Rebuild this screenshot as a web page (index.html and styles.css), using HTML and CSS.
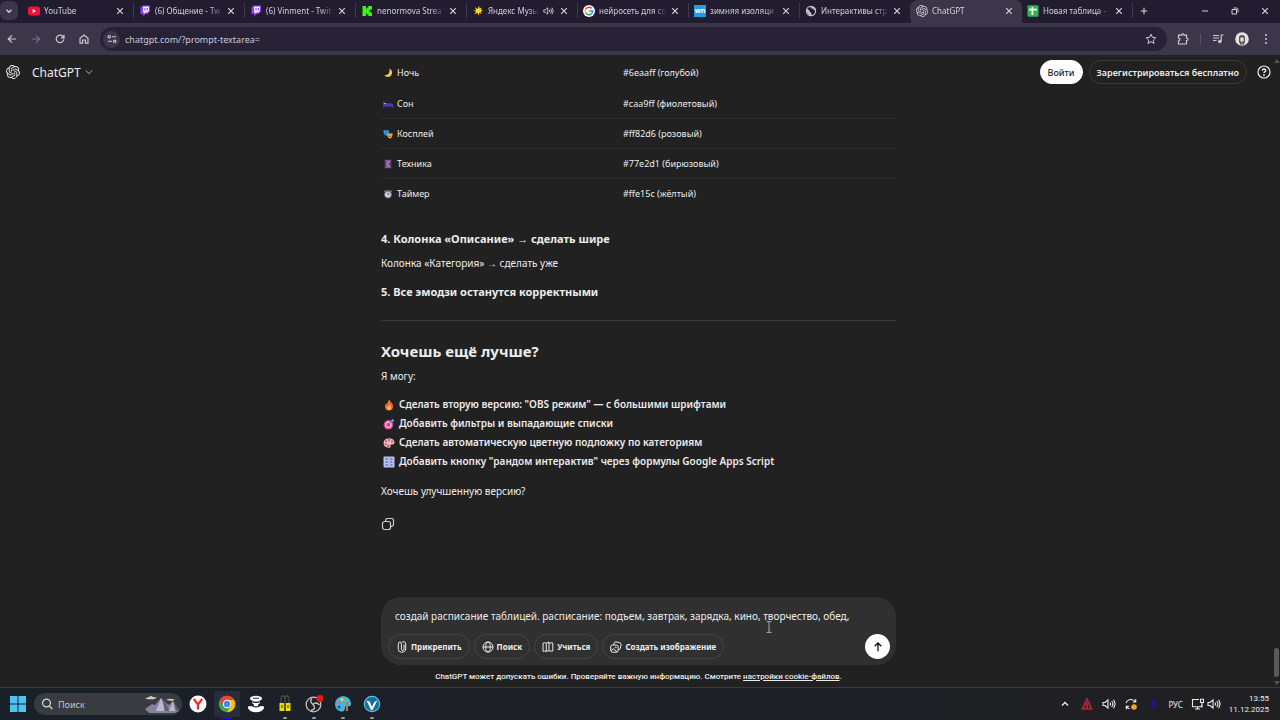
FILE: index.html
```html
<!DOCTYPE html>
<html lang="ru">
<head>
    <meta charset="UTF-8">
    <meta name="viewport" content="width=device-width, initial-scale=1.0">
    <title>ChatGPT</title>
    <link rel="stylesheet" href="styles.css">
</head>
<body>
    <!-- Общие иконки -->
    <svg class="sprite" width="0" height="0" aria-hidden="true">
        <symbol id="close" viewBox="0 0 8 8"><path d="M1.2 1.2l5.6 5.6M6.8 1.2L1.2 6.8" fill="none" stroke="currentColor" stroke-width="1.2"/></symbol>
        <symbol id="twitch" viewBox="0 0 12 12"><path d="M1.5 2.5L3.5.5H11v6L8.5 9H6.3L4 11.5V9H1.5z" fill="#8a3df5"/><path d="M4 1.5h6V6L8.3 7.6H6.5L5 9V7.6H4z" fill="#eee6ff"/><path d="M6 3v2.4M8.3 3v2.4" stroke="#8a3df5"/></symbol>
        <symbol id="openai" viewBox="0 0 24 24"><path fill="currentColor" d="M22.2819 9.8211a5.9847 5.9847 0 0 0-.5157-4.9108 6.0462 6.0462 0 0 0-6.5098-2.9A6.0651 6.0651 0 0 0 4.9807 4.1818a5.9847 5.9847 0 0 0-3.9977 2.9 6.0462 6.0462 0 0 0 .7427 7.0966 5.98 5.98 0 0 0 .511 4.9107 6.051 6.051 0 0 0 6.5146 2.9001A5.9847 5.9847 0 0 0 13.2599 24a6.0557 6.0557 0 0 0 5.7718-4.2058 5.9894 5.9894 0 0 0 3.9977-2.9001 6.0557 6.0557 0 0 0-.7475-7.0729zm-9.022 12.6081a4.4755 4.4755 0 0 1-2.8764-1.0408l.1419-.0804 4.7783-2.7582a.7948.7948 0 0 0 .3927-.6813v-6.7369l2.02 1.1686a.071.071 0 0 1 .038.052v5.5826a4.504 4.504 0 0 1-4.4945 4.4944zm-9.6607-4.1254a4.4708 4.4708 0 0 1-.5346-3.0137l.142.0852 4.783 2.7582a.7712.7712 0 0 0 .7806 0l5.8428-3.3685v2.3324a.0804.0804 0 0 1-.0332.0615L9.74 19.9502a4.4992 4.4992 0 0 1-6.1408-1.6464zM2.3408 7.8956a4.485 4.485 0 0 1 2.3655-1.9728V11.6a.7664.7664 0 0 0 .3879.6765l5.8144 3.3543-2.0201 1.1685a.0757.0757 0 0 1-.071 0l-4.8303-2.7865A4.504 4.504 0 0 1 2.3408 7.872zm16.5963 3.8558L13.1038 8.364 15.1192 7.2a.0757.0757 0 0 1 .071 0l4.8303 2.7913a4.4944 4.4944 0 0 1-.6765 8.1042v-5.6772a.79.79 0 0 0-.407-.667zm2.0107-3.0231l-.142-.0852-4.7735-2.7818a.7759.7759 0 0 0-.7854 0L9.409 9.2297V6.8974a.0662.0662 0 0 1 .0284-.0615l4.8303-2.7866a4.4992 4.4992 0 0 1 6.6802 4.66zM8.3065 12.863l-2.02-1.1638a.0804.0804 0 0 1-.038-.0567V6.0742a4.4992 4.4992 0 0 1 7.3757-3.4537l-.142.0805L8.704 5.459a.7948.7948 0 0 0-.3927.6813zm1.0976-2.3654l2.602-1.4998 2.6069 1.4998v2.9994l-2.5974 1.4997-2.6067-1.4997Z"/></symbol>
        <symbol id="sound" viewBox="0 0 14 12"><path d="M1 4.5h2L6 2v8L3 7.5H1zM8 4.5q1.2 1.5 0 3M9.7 3q2.4 3 0 6M11.5 1.8q3 4.2 0 8.4" fill="none" stroke="currentColor" stroke-width="1.1"/></symbol>
    </svg>

    <div class="tab-strip">
        <button class="tab-search" aria-label="Поиск вкладок"><svg width="8" height="8" viewBox="0 0 8 8"><path d="M1.5 2.7L4 5.2l2.5-2.5" fill="none" stroke="currentColor" stroke-width="1.4"/></svg></button>
        <div class="tab">
            <svg class="favicon" viewBox="0 0 12 12"><rect y="1.5" width="12" height="9" rx="2.5" fill="#f5103c"/><path d="M4.7 4v4L8 6z" fill="#fff"/></svg>
            <span class="tab-title">YouTube</span>
            <button class="tab-close" aria-label="Закрыть"><svg width="8" height="8"><use href="#close"/></svg></button>
        </div>
        <div class="tab">
            <svg class="favicon"><use href="#twitch"/></svg>
            <span class="tab-title">(6) Общение - Tw</span>
            <button class="tab-close" aria-label="Закрыть"><svg width="8" height="8"><use href="#close"/></svg></button>
        </div>
        <div class="tab">
            <svg class="favicon"><use href="#twitch"/></svg>
            <span class="tab-title">(6) Vinment - Twit</span>
            <button class="tab-close" aria-label="Закрыть"><svg width="8" height="8"><use href="#close"/></svg></button>
        </div>
        <div class="tab">
            <svg class="favicon" viewBox="0 0 12 12"><path d="M1.5 1H5v2.5h1.2V2.3h1.2V1H11v3.5H9.5V5.5H8.3v1h1.2v1H11V11H7.4V9.7H6.2V8.5H5V11H1.5z" fill="#3df218"/></svg>
            <span class="tab-title">nenormova Strea</span>
            <button class="tab-close" aria-label="Закрыть"><svg width="8" height="8"><use href="#close"/></svg></button>
        </div>
        <div class="tab">
            <svg class="favicon" viewBox="0 0 12 12"><path d="M7 .8l.7 2.6 2.2-.8-1 2 2 1.2-2.1.5.8 2.7-2.1-1.4-1 3.2-.9-3L2.2 9.5l1.9-3L1 5.4l3.3-.2-1.4-3 2.7 1.7z" fill="#ffd52e"/></svg>
            <span class="tab-title">Яндекс Музы</span>
            <svg class="tab-sound"><use href="#sound"/></svg>
            <button class="tab-close" aria-label="Закрыть"><svg width="8" height="8"><use href="#close"/></svg></button>
        </div>
        <div class="tab">
            <svg class="favicon" viewBox="0 0 12 12"><circle cx="6" cy="6" r="6" fill="#fff"/><g fill="none" stroke-width="1.6"><path d="M8.7 3.4A3.8 3.8 0 0 0 2.8 4" stroke="#ea4335"/><path d="M2.8 4a3.8 3.8 0 0 0 0 4" stroke="#fbbc05"/><path d="M2.8 8a3.8 3.8 0 0 0 5.5 1" stroke="#34a853"/><path d="M8.3 9A3.8 3.8 0 0 0 9.7 6H6.2" stroke="#4285f4"/></g></svg>
            <span class="tab-title">нейросеть для со</span>
            <button class="tab-close" aria-label="Закрыть"><svg width="8" height="8"><use href="#close"/></svg></button>
        </div>
        <div class="tab">
            <span class="favicon favicon-wn">wn</span>
            <span class="tab-title">зимняя изоляци</span>
            <button class="tab-close" aria-label="Закрыть"><svg width="8" height="8"><use href="#close"/></svg></button>
        </div>
        <div class="tab">
            <svg class="favicon" viewBox="0 0 12 12"><circle cx="6" cy="6" r="4.6" fill="none" stroke="#c8c4d2" stroke-width="1.1"/><path d="M2 4l2.5 1.2v1.6l1.7.8v3H4.5L1.8 7zM5.5 1.5l1 2 2 .3.3 1.5 2-.3-1-2.5z" fill="#c8c4d2"/></svg>
            <span class="tab-title">Интерактивы стр</span>
            <button class="tab-close" aria-label="Закрыть"><svg width="8" height="8"><use href="#close"/></svg></button>
        </div>
        <div class="tab active">
            <svg class="favicon"><use href="#openai"/></svg>
            <span class="tab-title">ChatGPT</span>
            <button class="tab-close" aria-label="Закрыть"><svg width="8" height="8"><use href="#close"/></svg></button>
        </div>
        <div class="tab">
            <svg class="favicon" viewBox="0 0 12 12"><rect x=".5" y=".3" width="11" height="11.4" rx="1" fill="#32b350"/><path d="M2 4.6h8M5.4 2v8" stroke="#fff" stroke-width="1.7"/></svg>
            <span class="tab-title">Новая таблица -</span>
            <button class="tab-close" aria-label="Закрыть"><svg width="8" height="8"><use href="#close"/></svg></button>
        </div>
        <button class="new-tab" aria-label="Новая вкладка"><svg width="8" height="8" viewBox="0 0 8 8"><path d="M4 .8v6.4M.8 4h6.4" stroke="currentColor" stroke-width="1.1"/></svg></button>
        <div class="window-buttons">
            <button aria-label="Свернуть"><svg width="8" height="8" viewBox="0 0 8 8"><path d="M1 4h6" stroke="currentColor"/></svg></button>
            <button aria-label="Окно"><svg width="8" height="8" viewBox="0 0 8 8"><path d="M1 2.5h4.5V7H1zM2.6 1h3q1.4 0 1.4 1.4v3" fill="none" stroke="currentColor"/></svg></button>
            <button aria-label="Закрыть окно"><svg width="8" height="8"><use href="#close"/></svg></button>
        </div>
    </div>

    <div class="toolbar">
        <nav class="nav-buttons">
            <button aria-label="Назад"><svg width="10" height="10" viewBox="0 0 10 10"><path d="M9 5H1.5M5 1.3L1.3 5 5 8.7" fill="none" stroke="currentColor" stroke-width="1.2"/></svg></button>
            <button class="dim" aria-label="Вперёд"><svg width="10" height="10" viewBox="0 0 10 10"><path d="M1 5h7.5M5 1.3L8.7 5 5 8.7" fill="none" stroke="currentColor" stroke-width="1.2"/></svg></button>
            <button aria-label="Обновить"><svg width="10" height="10" viewBox="0 0 10 10"><path d="M8.8 5.3A3.8 3.8 0 1 1 7.7 2.2L8.9 3.5M9 .8v3H6" fill="none" stroke="currentColor" stroke-width="1.2"/></svg></button>
            <button aria-label="Домой"><svg width="10" height="10" viewBox="0 0 10 10"><path d="M1 4.2L5 1l4 3.2v5H6.4V6H3.6v3.2H1z" fill="none" stroke="currentColor" stroke-width="1.2"/></svg></button>
        </nav>
        <div class="address-bar">
            <button class="site-info" aria-label="Сведения о сайте"><svg width="10" height="10" viewBox="0 0 10 10"><g fill="none" stroke="currentColor" stroke-width="1.1"><circle cx="2.3" cy="2.7" r="1.2"/><path d="M5 2.7h4M1 7.3h4"/><circle cx="7.7" cy="7.3" r="1.2"/></g></svg></button>
            <input class="address" type="text" value="chatgpt.com/?prompt-textarea=" aria-label="Адрес">
            <button class="star" aria-label="Добавить в закладки"><svg width="12" height="12" viewBox="0 0 12 12"><path d="M6 1.2l1.4 3.1 3.4.4-2.5 2.3.7 3.4L6 8.7l-3 1.7.7-3.4L1.2 4.7l3.4-.4z" fill="none" stroke="currentColor"/></svg></button>
        </div>
        <div class="toolbar-actions">
            <button aria-label="Расширения"><svg width="12" height="12" viewBox="0 0 12 12"><path d="M1.5 2.2h3.2q0-1.3 1.1-1.3T7 2.2h2.5V5q1.5 0 1.5 1.2T9.5 7.5V11h-8V8Q3 7.8 3 6.6T1.5 5.2z" fill="none" stroke="currentColor" stroke-width="1.2"/></svg></button>
            <i class="divider"></i>
            <button aria-label="Управление медиа"><svg width="12" height="12" viewBox="0 0 12 12"><path d="M1 2.5h6M1 5h6M1 7.5h3.5M9 2h2.5M9.2 2v6.5" fill="none" stroke="currentColor" stroke-width="1.2"/><circle cx="7.8" cy="8.5" r="1.7" fill="currentColor"/></svg></button>
            <button aria-label="Профиль"><svg width="14" height="14" viewBox="0 0 14 14"><circle cx="7" cy="7" r="6.8" fill="#e6e2df"/><path d="M4 10V6Q4 3 7 3t3 3v4L9 12H5z" fill="#5a5358"/><path d="M5.3 6.2Q7 4.500 8.700 6.200v2Q8.300 9.700 7 9.700T5.300 8.200z" fill="#e3dcd8"/><path d="M4.500 12.900L7 10.300l2.500 2.600z" fill="#88828a"/></svg></button>
            <button aria-label="Меню"><svg width="12" height="12" viewBox="0 0 12 12"><g fill="currentColor"><circle cx="6" cy="2" r="1"/><circle cx="6" cy="6" r="1"/><circle cx="6" cy="10" r="1"/></g></svg></button>
        </div>
    </div>

    <div class="page">
        <header class="page-header">
            <svg class="logo"><use href="#openai"/></svg>
            <button class="model">ChatGPT <svg width="8" height="8" viewBox="0 0 8 8"><path d="M.8 2.5L4 5.6l3.2-3.1" fill="none" stroke="#aaa"/></svg></button>
            <div class="account">
                <button class="login">Войти</button>
                <button class="signup">Зарегистрироваться бесплатно</button>
                <button class="help" aria-label="Справка"><svg width="14" height="14" viewBox="0 0 14 14"><circle cx="7" cy="7" r="6" fill="none" stroke="currentColor" stroke-width="1.2"/><path d="M5.200 5.600Q5.400 4 7 4t1.700 1.400Q8.700 6.300 7.700 6.900 7 7.300 7 8.100" fill="none" stroke="currentColor" stroke-width="1.400"/><circle cx="7" cy="10" r=".9" fill="currentColor"/></svg></button>
            </div>
        </header>

        <main class="chat">
            <table class="colors">
                <tr>
                    <td><svg class="emoji" viewBox="0 0 12 12"><path d="M7.500 1Q11.500 2.500 10.800 6.500 9.700 10.700 5.500 10.700 2.500 10.700 1.200 8.500 5 9 7 6.500 8.600 4 7.500 1z" fill="#f7c65a"/></svg>Ночь</td>
                    <td>#6eaaff (голубой)</td>
                </tr>
                <tr>
                    <td><svg class="emoji" viewBox="0 0 12 12"><path d="M.6 3v7M11.400 6v4" stroke="#5b3fa0"/><path d="M1 7.500h10.500V9H1z" fill="#5a45c5"/><path d="M3 5h6.500q2 0 2 2.500H1V5z" fill="#4838cf"/><path d="M1.200 4.700h2.500V6H1.200z" fill="#aaa2e8"/></svg>Сон</td>
                    <td>#caa9ff (фиолетовый)</td>
                </tr>
                <tr>
                    <td><svg class="emoji" viewBox="0 0 12 12"><path d="M.6 1.300Q3.800 2.300 7 1.300V5Q6.600 8 4 8 .6 7 .6 3z" fill="#3b9be6"/><path d="M2.200 3.600h1M4.700 3.600h1M2.600 5.800q1.300-1 2.500 0" fill="none" stroke="#16568f"/><path d="M5.300 5.200q3 .7 6-.4v3q-.7 3.400-3 3.500-3-.5-3-3.500z" fill="#f4b04a"/><path d="M6.800 7h.8M9.200 7h.8M7 8.600q1.500 1.500 2.800 0" fill="none" stroke="#8b4d18"/></svg>Косплей</td>
                    <td>#ff82d6 (розовый)</td>
                </tr>
                <tr>
                    <td><svg class="emoji" viewBox="0 0 12 12"><path d="M2 .8h8v10.400H2z" fill="#5d3c78"/><path d="M2.500 2h7M2.500 10h7" stroke="#a15aa6"/><path d="M4 3.500h4L4.500 6 8 8.500H4" fill="none" stroke="#d8a8b4"/></svg>Техника</td>
                    <td>#77e2d1 (бирюзовый)</td>
                </tr>
                <tr>
                    <td><svg class="emoji" viewBox="0 0 12 12"><circle cx="6" cy="6.700" r="4" fill="#d8d4e6" stroke="#89809c" stroke-width="1.200"/><path d="M1.600 3.300l2-1.700M10.400 3.300l-2-1.700M6 1v1.500" stroke="#8f879f" stroke-width="1.300"/><path d="M6 4.500v2.500l1.700-1" fill="none" stroke="#4b4262"/></svg>Таймер</td>
                    <td>#ffe15c (жёлтый)</td>
                </tr>
            </table>

            <h3>4. Колонка «Описание» → сделать шире</h3>
            <p>Колонка «Категория» → сделать уже</p>
            <h3>5. Все эмодзи останутся корректными</h3>
            <hr>
            <h2>Хочешь ещё лучше?</h2>
            <p>Я могу:</p>
            <ul class="options">
                <li><svg class="emoji" viewBox="0 0 12 12"><path d="M6.500.4Q7 2.500 8.700 4 10.400 5.700 10 8 9.400 11.600 6 11.600T2 8Q1.800 5.600 3.200 4 3.500 5.500 4.300 5.500 4 2.400 6.500.4z" fill="#f4692f"/><path d="M6.300 5.500Q8.500 7.500 8.200 9 7.600 11 6 11T3.900 9Q4 7.800 5 7.200 5.500 8 5.700 7.500z" fill="#ffc14b"/></svg>Сделать вторую версию: "OBS режим" — с большими шрифтами</li>
                <li><svg class="emoji" viewBox="0 0 12 12"><circle cx="5.400" cy="6.800" r="4.800" fill="#e63d8f"/><circle cx="5.400" cy="6.800" r="2.700" fill="none" stroke="#fbd4ed" stroke-width="1.200"/><path d="M5.400 6.800L9 3.200" stroke="#3c6fc6"/><path d="M8 2.500L9.800.5l.4 1.400 1.500.4-2 2H8z" fill="#43a2ef"/></svg>Добавить фильтры и выпадающие списки</li>
                <li><svg class="emoji" viewBox="0 0 12 12"><path d="M6 1.200q5.500.3 5.500 4.600Q11.300 8 9 7.500T7.600 9.400Q7.500 11 5.500 10.800.5 10.200.5 5.700.8 1.500 6 1.200z" fill="#f3b5b9"/><g><circle cx="3" cy="4.300" r="1" fill="#e34553"/><circle cx="6" cy="3" r="1" fill="#874f9f"/><circle cx="9" cy="4.500" r="1" fill="#d13d54"/><circle cx="2.800" cy="7.200" r="1" fill="#557ab8"/><circle cx="5.200" cy="8.900" r="1" fill="#bd3347"/></g></svg>Сделать автоматическую цветную подложку по категориям</li>
                <li><svg class="emoji" viewBox="0 0 12 12"><rect x=".5" y=".5" width="11" height="11" rx="1" fill="#b9c4f4"/><path d="M6 1v10" stroke="#8d9adb" stroke-width=".7"/><path d="M2.500 3h2M7.500 3h2M2.500 6h2M7.500 6h2M2.500 9h2M7.500 9h2" stroke="#5f6bab" stroke-width="1.400"/></svg>Добавить кнопку "рандом интерактив" через формулы Google Apps Script</li>
            </ul>
            <p>Хочешь улучшенную версию?</p>
            <button class="copy" aria-label="Копировать"><svg width="14" height="14" viewBox="0 0 14 14"><g fill="none" stroke="currentColor" stroke-width="1.2"><rect x="1.500" y="4.500" width="8" height="8" rx="2"/><path d="M4.700 4.500V3.300q0-1.800 1.800-1.800h4.200q1.800 0 1.800 1.800v4.200q0 1.800-1.800 1.800H9.500"/></g></svg></button>
        </main>

        <form class="composer">
            <input class="prompt" type="text" value="создай расписание таблицей. расписание: подъем, завтрак, зарядка, кино, творчество, обед," aria-label="Сообщение">
            <div class="tools">
                <button type="button"><svg width="12" height="12" viewBox="0 0 12 12"><path d="M8 3.500v4.700Q8 9.500 6.700 9.500T5.400 8.200V3.300Q5.400 1 3.900 1T2.300 3.300v5Q2.400 11 5.500 11.300 9.700 11 9.700 8V2.800Q9.600.8 7.800.7 6.500.7 5.800 1.500" fill="none" stroke="currentColor"/></svg>Прикрепить</button>
                <button type="button"><svg width="12" height="12" viewBox="0 0 12 12"><g fill="none" stroke="currentColor"><circle cx="6" cy="6" r="5"/><ellipse cx="6" cy="6" rx="2.200" ry="5"/><path d="M1 6h10"/></g></svg>Поиск</button>
                <button type="button"><svg width="12" height="12" viewBox="0 0 12 12"><path d="M4.300 2.200v8.300Q2.500 9.600 1 10.300V2.200q1.700-1 3.300 0L7 1v8.500l-2.700 1M7 2h3.800v8H7" fill="none" stroke="currentColor"/></svg>Учиться</button>
                <button type="button"><svg width="12" height="12" viewBox="0 0 12 12"><g fill="none" stroke="currentColor"><rect x=".7" y="4" width="7.500" height="7.200" rx="1.800"/><path d="M3.500 4l.5-1.800Q4.500.6 6 .9l3.800.8q1.600.4 1.300 2l-.7 3.600Q10 8.800 8.200 8.600M1 9.700l2.300-2 3.700 3"/><circle cx="5.800" cy="6.300" r=".5"/></g></svg>Создать изображение</button>
                <button type="submit" class="send" aria-label="Отправить"><svg width="12" height="12" viewBox="0 0 12 12"><path d="M6 10.300V2.200M2.700 5.300L6 2l3.300 3.300" fill="none" stroke="currentColor" stroke-width="1.300"/></svg></button>
            </div>
            <svg class="text-cursor" viewBox="0 0 6 12"><path d="M.5 .6h5M.5 11.400h5M3 .6v10.800" stroke="currentColor"/></svg>
        </form>
        <p class="notice">ChatGPT может допускать ошибки. Проверяйте важную информацию. Смотрите <a href="#">настройки cookie-файлов</a>.</p>

        <div class="scrollbar"><i class="arrow-up"></i><i class="thumb"></i><i class="arrow-down"></i></div>
    </div>

    <footer class="taskbar">
        <button class="start" aria-label="Пуск"><svg width="16" height="16" viewBox="0 0 16 16"><path d="M0 0h7.500v7.500H0zM8.500 0H16v7.500H8.500zM0 8.500h7.500V16H0zM8.500 8.500H16V16H8.500z" fill="#4cc5f5"/></svg></button>
        <label class="search">
            <svg width="12" height="12" viewBox="0 0 12 12"><circle cx="5.500" cy="5" r="3.900" fill="none" stroke="#ddd" stroke-width="1.200"/><path d="M8.300 7.900l3 3.200" stroke="#ddd" stroke-width="1.300"/></svg>
            <input type="text" placeholder="Поиск">
            <svg width="36" height="18" viewBox="0 0 36 18"><path d="M1 14L8 9l3 1 6-7 5 5 3 2 4-4 6 10-4 2H5z" fill="#85829c"/><path d="M17 3l-5 13h8l1-5zM29 6l-4 10h6z" fill="#bbb7cf"/><path d="M18 4l3 12h4l-2-6zM30 7l2 9h3z" fill="#615d78"/><path d="M1 3.500q3-1.500 4-1.500 2-2 4 0l4 .5-3 1.800H4zM22 5q4-2 6-1l3 .5-3 1.500z" fill="#cacdb8"/></svg>
        </label>
        <div class="apps">
            <button aria-label="Яндекс"><svg width="18" height="18" viewBox="0 0 18 18"><circle cx="9" cy="9" r="8.500" fill="#fff"/><path d="M4.800 4L9 9.500V14.500M13.200 4L9 9.500" fill="none" stroke="#f02b2b" stroke-width="2.200"/></svg></button>
            <button class="current" aria-label="Chrome"><svg width="18" height="18" viewBox="0 0 18 18"><circle cx="9" cy="9" r="8.300" fill="#34a853"/><path d="M1.800 4.900A8.300 8.300 0 0 1 16.200 4.900H9L5.500 11z" fill="#ea4335"/><path d="M16.200 4.900A8.300 8.300 0 0 1 9 17.300L12.600 11 9 4.900z" fill="#fbbc05"/><circle cx="9" cy="9" r="4.200" fill="#fff"/><circle cx="9" cy="9" r="3.200" fill="#4285f4"/></svg></button>
            <button aria-label="Приложение"><svg width="18" height="18" viewBox="0 0 18 18"><ellipse cx="9" cy="3.500" rx="6" ry="2.700" fill="#fff"/><path d="M5.500 6.500h7q1 2-1.500 3.200v1.500H7V9.700Q4.500 8.500 5.500 6.500z" fill="#fff"/><path d="M1 11.500q3-1 4.500 0Q9 13.500 12.500 11.500q1.500-1 4.500 0v1.800Q15 17.300 9 17.300T1 13.300z" fill="#fff"/><path d="M6 3.300h6M6 7.500h6" stroke="#292c31" stroke-width="1.100"/></svg></button>
            <button class="running" aria-label="Замки"><svg width="18" height="18" viewBox="0 0 18 18"><path d="M5 8V4q0-3 2-3t2 3v4M9 8V4q0-3 2-3t2 3v4" fill="none" stroke="#4c4d3c" stroke-width="1.300"/><path d="M3.500 8H8.300v8H3.500zM9.700 8h4.800v8H9.700z" fill="#f5d90e"/><path d="M6 10v3M12 10v3" stroke="#645b10" stroke-width="1.300"/></svg></button>
            <button class="running" aria-label="OBS"><svg width="18" height="18" viewBox="0 0 18 18"><circle cx="8.500" cy="9.500" r="7.300" fill="#202020" stroke="#c9c9c9" stroke-width="1.200"/><g fill="none" stroke="#c9c9c9" stroke-width="1.400"><path d="M7 3.500Q4 6.500 8 9.500M14.500 10Q11 6.500 8 9.500M6 15.500Q12 14 8 9.500"/></g><circle cx="15" cy="3.500" r="3.500" fill="#ee1717"/></svg></button>
            <button class="running" aria-label="Paint"><svg width="18" height="18" viewBox="0 0 18 18"><path d="M9 1Q16.500 1.500 17 8.500 17 12 14 11q-3-1-3 2 0 4-4 3.500Q1 15 1 9 1.500 2 9 1z" fill="#45b4dc"/><circle cx="5" cy="8" r="1.600" fill="#f36d4b"/><circle cx="8" cy="4.500" r="1.500" fill="#ffd253"/><circle cx="12.500" cy="5.500" r="1.500" fill="#57d376"/><circle cx="5" cy="12" r="1.500" fill="#1959a5"/><path d="M13 7v9" stroke="#bd773f" stroke-width="2"/></svg></button>
            <button class="running" aria-label="Vegas"><svg width="18" height="18" viewBox="0 0 18 18"><circle cx="9" cy="9" r="7.700" fill="#156f99" stroke="#65bada" stroke-width="1.200"/><path d="M3.500 5.500l3.200 1L9 12l2-4.500 3.500-2.500L9.500 15H8z" fill="#fff"/></svg></button>
        </div>
        <div class="tray">
            <svg width="14" height="12" viewBox="0 0 14 12"><path d="M4 7.500l3-3 3 3" fill="none" stroke="currentColor" stroke-width="1.300"/></svg>
            <svg width="14" height="12" viewBox="0 0 14 12"><path d="M7 1.300L2.500 10.700h9z" fill="none" stroke="#a22537" stroke-width="2"/><path d="M7 5v5" stroke="#a22537" stroke-width="2"/></svg>
            <svg width="14" height="12"><use href="#sound"/></svg>
            <svg width="14" height="12" viewBox="0 0 14 12"><path d="M2 5Q3.500 1.500 7 1.500q3 0 4.500 2.500M11.700 1v3h-3M5.500 10.600Q3.500 10.500 2.500 8.500M2.300 11.200V8.300h2.900" fill="none" stroke="currentColor" stroke-width="1.100"/><circle cx="10" cy="9" r="2.800" fill="#f4a51f"/></svg>
            <svg width="14" height="12" viewBox="0 0 14 12"><rect x="5" y="1" width="4.500" height="6.500" rx="2.200" fill="#1b168a"/><path d="M3.500 5.500q0 4 3.700 4t3.800-4M7.200 9v2.300" fill="none" stroke="#1b168a" stroke-width="1.300"/></svg>
            <span class="lang">РУС</span>
            <span class="network">
                <svg width="14" height="12" viewBox="0 0 14 12"><path d="M8 1.500H1.500v7.200h9V7M4 11h5M6.500 8.700V11M9.500 1.200h3v3.300h-3zM11 4.500v5" fill="none" stroke="currentColor" stroke-width="1.100"/></svg>
                <svg width="14" height="12"><use href="#sound"/></svg>
            </span>
            <time class="clock" datetime="2025-12-11T13:55">13:55<br>11.12.2025</time>
        </div>
    </footer>
</body>
</html>
```
FILE: styles.css
```css
* {
    box-sizing: border-box;
}
body {
    display: flex;
    flex-direction: column;
    height: 100vh;
    margin: 0;
    overflow: hidden;
    background-color: #212121;
    color: #ececec;
    font-family: "Noto Sans", "Open Sans", sans-serif;
    font-size: 10px;
}
button, input {
    font: inherit;
    color: inherit;
    border: 0;
    padding: 0;
    background: none;
    outline: none;
}
button {
    display: flex;
    align-items: center;
    justify-content: center;
}
svg {
    display: block;
    flex: none;
}
.sprite {
    position: absolute;
}

/* Вкладки */
.tab-strip {
    display: flex;
    flex: none;
    align-items: center;
    height: 23px;
    padding-bottom: 2px;
    background-color: #211c30;
    color: #d3cfdc;
    font-size: 8px;
}
.tab-search {
    width: 18px;
    height: 19px;
    margin-right: 5px;
    border-radius: 6px;
    background-color: #3c364a;
}
.tab {
    display: flex;
    flex: 0 1 111px;
    align-items: center;
    min-width: 0;
    height: 15px;
    padding: 0 9px 0 5px;
    border-right: 1px solid #3e384c;
}
.tab.active {
    height: 23px;
    margin-bottom: -2px;
    padding-bottom: 2px;
    border: 0;
    border-radius: 7px 7px 0 0;
    background-color: #3c364a;
}
.favicon {
    flex: none;
    width: 12px;
    height: 12px;
}
.favicon-wn {
    background-color: #229ee8;
    color: #fff;
    font-size: 7px;
    font-weight: bold;
    line-height: 12px;
    text-align: center;
}
.tab-title {
    flex: 1;
    margin: 0 4px;
    overflow: hidden;
    white-space: nowrap;
    -webkit-mask-image: linear-gradient(to right, #000 80%, transparent);
    mask-image: linear-gradient(to right, #000 80%, transparent);
}
.tab-sound {
    width: 11px;
    height: 10px;
    margin-right: 6px;
}
.new-tab {
    width: 22px;
}
.window-buttons {
    display: flex;
    margin-left: auto;
}
.window-buttons button {
    width: 30px;
}

/* Адресная строка */
.toolbar {
    display: flex;
    flex: none;
    align-items: center;
    height: 32px;
    background-color: #3c364a;
    color: #cdc8d6;
}
.nav-buttons {
    display: flex;
}
.nav-buttons button {
    width: 24px;
}
.nav-buttons .dim {
    color: #777083;
}
.address-bar {
    display: flex;
    flex: 1;
    align-items: center;
    height: 24px;
    margin-left: 4px;
    padding: 0 10px 0 3px;
    border-radius: 12px;
    background-color: #272236;
}
.site-info {
    width: 17px;
    height: 17px;
    border-radius: 50%;
    background-color: #3c364a;
}
.address {
    flex: 1;
    min-width: 0;
    margin-left: 5px;
    font-size: 9px;
}
.toolbar-actions {
    display: flex;
    gap: 11px;
    align-items: center;
    padding: 0 8px 0 10px;
}
.divider {
    width: 1px;
    height: 10px;
    background-color: #565063;
}

/* Страница */
.page {
    position: relative;
    display: flex;
    flex: 1;
    flex-direction: column;
    align-items: center;
    min-height: 0;
    padding: 3px 12px 0 9px;
}
.page-header {
    position: absolute;
    top: 0;
    left: 0;
    right: 0;
    display: flex;
    align-items: center;
    height: 34px;
    padding: 0 9px 0 6px;
}
.logo {
    width: 14px;
    height: 14px;
}
.model {
    gap: 4px;
    margin-left: 12px;
    font-size: 12px;
}
.account {
    display: flex;
    gap: 6px;
    margin-left: auto;
    font-weight: 600;
    font-size: 9px;
}
.login, .signup {
    height: 24px;
    padding: 0 7px;
    border: 1px solid #3b3b3b;
    border-radius: 12px;
    white-space: nowrap;
}
.login {
    border-color: #fff;
    background-color: #fff;
    color: #222;
    font-weight: 500;
}
.help {
    margin-left: 4px;
}
.chat {
    flex: 1;
    width: 100%;
    max-width: 515px;
    min-height: 0;
    font-size: 10px;
}
.colors {
    width: 100%;
    border-collapse: collapse;
    font-size: 9px;
}
.colors td {
    height: 30px;
    padding: 0 2px;
    border-bottom: 1px solid #2b2b2b;
}
.colors td:first-child {
    width: 240px;
}
.colors tr:first-child td,
.colors tr:last-child td {
    border-bottom-color: transparent;
}
.emoji {
    display: inline-block;
    width: 10px;
    height: 10px;
    margin-right: 4px;
    vertical-align: -2px;
}
.chat h2, .chat h3, .chat p {
    margin: 0;
    line-height: 20px;
}
.chat h3 {
    margin: 20px 0 4px;
    font-size: 11px;
}
.chat p + h3 {
    margin: 9px 0 0;
}
.chat hr {
    margin: 18px 0 20px;
    border: 0;
    border-top: 1px solid #3a3a3a;
}
.chat h2 {
    margin-bottom: 5px;
    font-size: 15px;
}
.options {
    margin: 9px 0 10px;
    padding: 0 0 0 2px;
    list-style: none;
    font-weight: 600;
    line-height: 19px;
}
.options .emoji {
    width: 12px;
    height: 12px;
    vertical-align: -3px;
}
.copy {
    margin-top: 16px;
    color: #ccc;
}

/* Поле ввода */
.composer {
    position: relative;
    width: 100%;
    max-width: 515px;
    padding: 9px 6px 6px 7px;
    border-radius: 20px;
    background-color: #303030;
}
.prompt {
    display: block;
    width: 100%;
    height: 20px;
    margin-bottom: 8px;
    padding: 0 7px;
    font-size: 10px;
}
.tools {
    display: flex;
    gap: 4px;
}
.tools button {
    gap: 3px;
    height: 25px;
    padding: 0 7px;
    border: 1px solid #444;
    border-radius: 13px;
    font-size: 8px;
    font-weight: bold;
    white-space: nowrap;
}
.tools .send {
    width: 25px;
    margin-left: auto;
    padding: 0;
    border: 0;
    background-color: #fff;
    color: #111;
}
.text-cursor {
    position: absolute;
    top: 24px;
    left: 385px;
    width: 6px;
    height: 12px;
    color: #aaa;
}
.notice {
    margin: 6px 0 4px;
    font-family: Roboto, "Noto Sans", sans-serif;
    font-size: 8px;
    font-weight: 500;
    line-height: 12px;
}
.notice a {
    color: inherit;
}
.scrollbar {
    position: absolute;
    top: 0;
    right: 0;
    bottom: 0;
    display: flex;
    flex-direction: column;
    align-items: center;
    width: 7px;
    padding: 4px 0 2px;
}
.arrow-up, .arrow-down {
    border: 3px solid transparent;
}
.arrow-up {
    border-top-width: 0;
    border-bottom: 4px solid #555;
}
.arrow-down {
    border-bottom-width: 0;
    border-top: 4px solid #555;
}
.thumb {
    width: 5px;
    height: 29px;
    margin: auto 0 4px;
    border-radius: 3px;
    background-color: #5a5a5a;
}

/* Панель задач */
.taskbar {
    display: flex;
    flex: none;
    align-items: center;
    height: 33px;
    padding: 0 11px 0 10px;
    border-top: 1px solid #3a3a3a;
    background: linear-gradient(to right, #182028, #1e2028 35%, #202022);
}
.search {
    display: flex;
    align-items: center;
    width: 148px;
    height: 22px;
    margin-left: 8px;
    padding: 0 2px 0 7px;
    border-radius: 11px;
    background-color: #383c40;
}
.search input {
    flex: 1;
    min-width: 0;
    margin-left: 5px;
    font-size: 9px;
}
.search input::placeholder {
    color: #c5c5c5;
}
.apps {
    display: flex;
    margin-left: 2px;
}
.apps button {
    position: relative;
    width: 26px;
    height: 26px;
    margin: 0 2px 0 1px;
    border-radius: 3px;
}
.apps .current {
    background-color: #292c3b;
}
.apps .current::after, .apps .running::after {
    content: "";
    position: absolute;
    bottom: -2px;
    left: 11px;
    width: 4px;
    height: 2px;
    border-radius: 1px;
    background-color: #9b9b9b;
}
.apps .current::after {
    left: 8px;
    width: 10px;
    background-color: #1f17b5;
}
.tray {
    display: flex;
    gap: 8px;
    align-items: center;
    margin-left: auto;
    font-size: 8px;
}
.network {
    display: flex;
    gap: 2px;
}
.clock {
    font-family: Roboto, "Noto Sans", sans-serif;
    line-height: 11px;
    text-align: right;
}
```
